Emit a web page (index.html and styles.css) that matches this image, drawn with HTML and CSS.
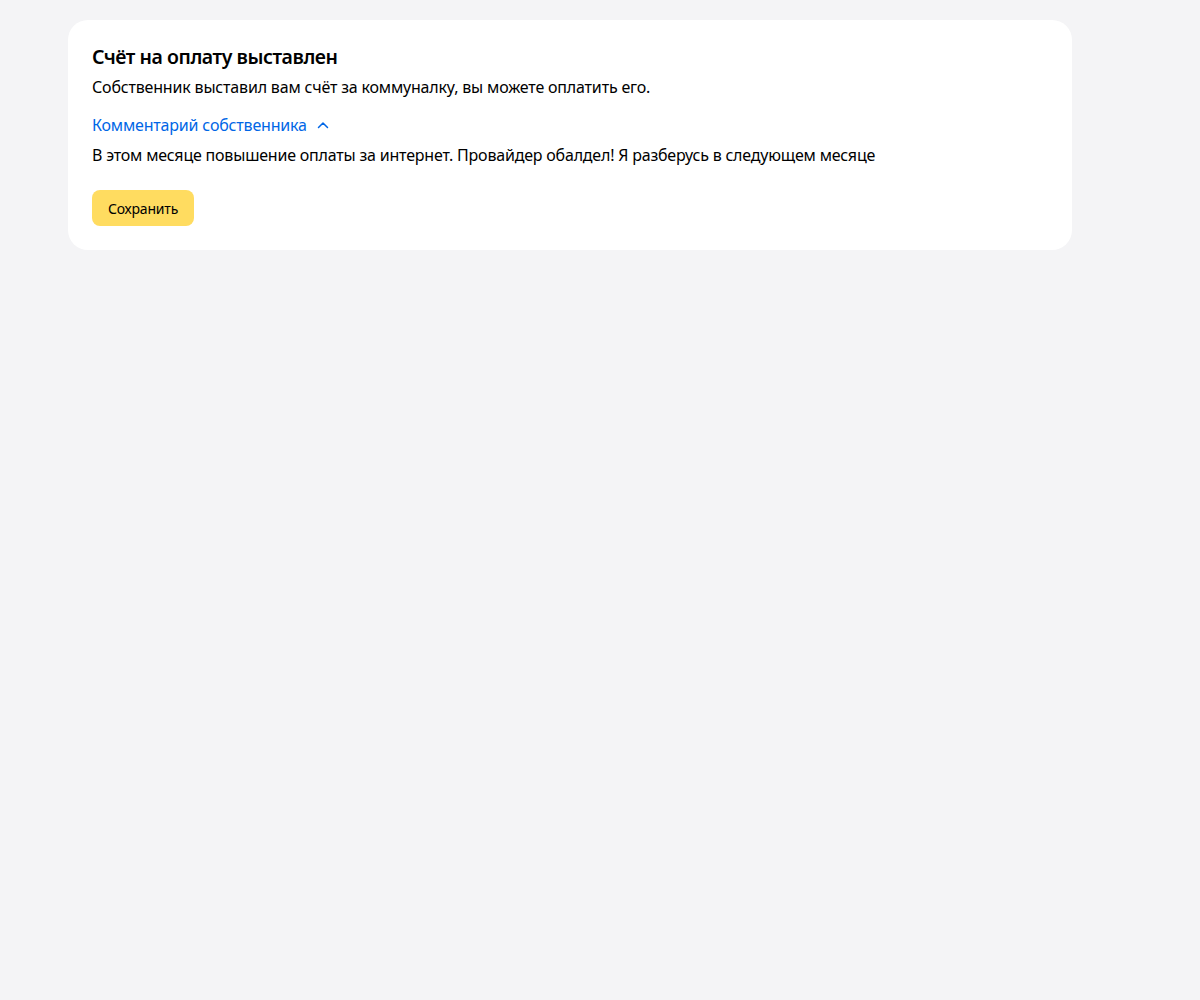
FILE: index.html
```html
<!DOCTYPE html>
<html lang="ru">
<head>
<meta charset="utf-8">
<title>Счёт на оплату выставлен</title>
<link rel="stylesheet" href="styles.css">
</head>
<body>
<div class="page">
  <section class="card">
    <h1 class="title">Счёт на оплату выставлен</h1>
    <p class="text">Собственник выставил вам счёт за коммуналку, вы можете оплатить его.</p>
    <button class="link" type="button">Комментарий собственника
      <svg class="chev" width="14" height="14" viewBox="0 0 14 14"><path d="M2.5 9.5 L7 5 L11.5 9.5" fill="none" stroke="currentColor" stroke-width="1.5" stroke-linecap="round" stroke-linejoin="round"/></svg>
    </button>
    <p class="comment">В этом месяце повышение оплаты за интернет. Провайдер обалдел! Я разберусь в следующем месяце</p>
    <button class="save" type="button">Сохранить</button>
  </section>
</div>
</body>
</html>
```
FILE: styles.css
```css
* { box-sizing: border-box; }
html, body { margin: 0; padding: 0; }
body {
  background: #f4f4f6;
  font-family: "Noto Sans", "Open Sans", sans-serif;
  color: #000;
}
.page { padding: 20px 128px 20px 68px; }
.card {
  background: #fff;
  border-radius: 20px;
  padding: 24px;
  display: flex;
  flex-direction: column;
  align-items: flex-start;
}
.title {
  margin: 0;
  font-size: 19.5px;
  line-height: 26px;
  font-weight: 600;
  letter-spacing: -0.45px;
}
.text {
  margin: 6px 0 0;
  font-size: 16px;
  line-height: 22px;
  letter-spacing: -0.18px;
}
.link {
  margin-top: 16px;
  padding: 0;
  border: 0;
  background: none;
  font: inherit;
  font-size: 16px;
  line-height: 22px;
  letter-spacing: -0.18px;
  color: #0066e6;
  display: flex;
  align-items: center;
  gap: 9px;
  cursor: pointer;
}
.chev { display: block; }
.comment {
  margin: 8px 0 0;
  font-size: 16px;
  line-height: 22px;
  letter-spacing: -0.2px;
}
.save {
  margin-top: 24px;
  height: 36px;
  padding: 0 16px;
  border: 0;
  border-radius: 8px;
  background: #ffdc60;
  font: inherit;
  font-size: 14px;
  letter-spacing: -0.2px;
  color: #000;
  cursor: pointer;
}
```
